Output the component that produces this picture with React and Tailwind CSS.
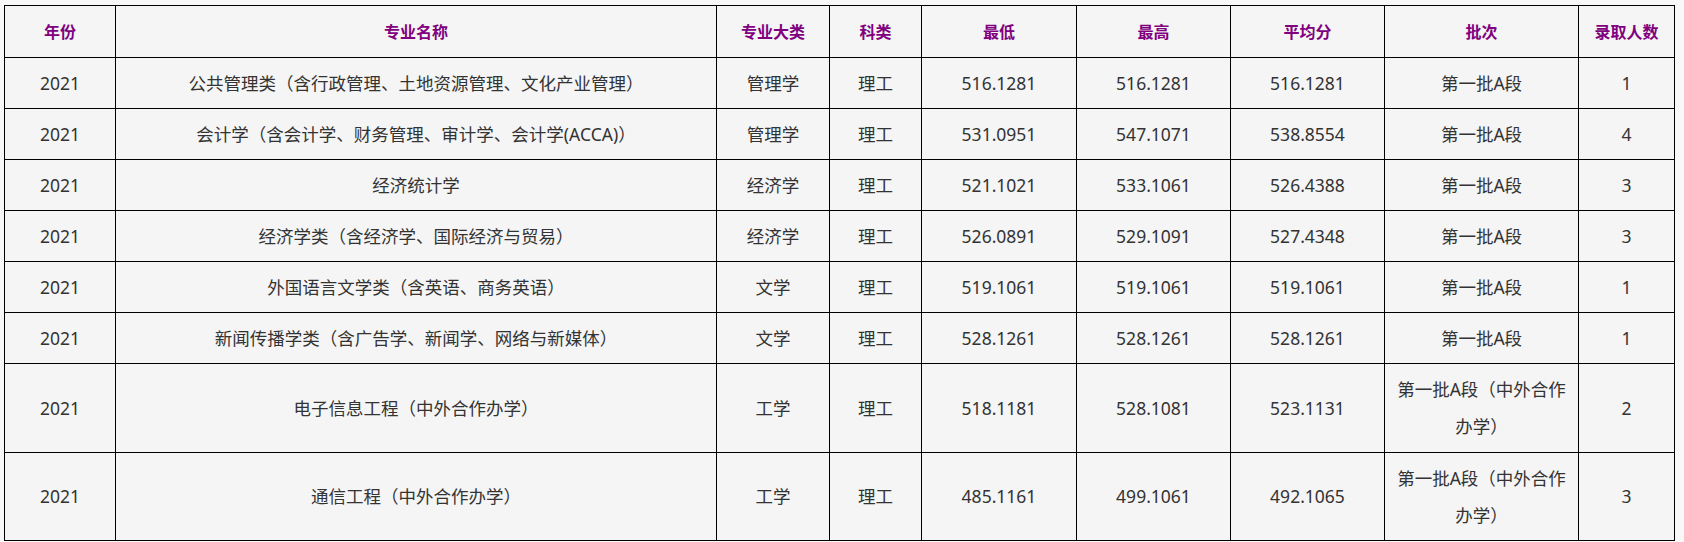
import React from 'react';

const headers = ['年份', '专业名称', '专业大类', '科类', '最低', '最高', '平均分', '批次', '录取人数'];
const widths = ['w-[111px]', 'w-[601px]', 'w-[113px]', 'w-[92px]', 'w-[155px]', 'w-[154px]', 'w-[154px]', 'w-[194px]', 'w-[96px]'];

const rows = [
  ['2021', '公共管理类（含行政管理、土地资源管理、文化产业管理）', '管理学', '理工', '516.1281', '516.1281', '516.1281', '第一批A段', '1'],
  ['2021', '会计学（含会计学、财务管理、审计学、会计学(ACCA)）', '管理学', '理工', '531.0951', '547.1071', '538.8554', '第一批A段', '4'],
  ['2021', '经济统计学', '经济学', '理工', '521.1021', '533.1061', '526.4388', '第一批A段', '3'],
  ['2021', '经济学类（含经济学、国际经济与贸易）', '经济学', '理工', '526.0891', '529.1091', '527.4348', '第一批A段', '3'],
  ['2021', '外国语言文学类（含英语、商务英语）', '文学', '理工', '519.1061', '519.1061', '519.1061', '第一批A段', '1'],
  ['2021', '新闻传播学类（含广告学、新闻学、网络与新媒体）', '文学', '理工', '528.1261', '528.1261', '528.1261', '第一批A段', '1'],
  ['2021', '电子信息工程（中外合作办学）', '工学', '理工', '518.1181', '528.1081', '523.1131', '第一批A段（中外合作办学）', '2'],
  ['2021', '通信工程（中外合作办学）', '工学', '理工', '485.1161', '499.1061', '492.1065', '第一批A段（中外合作办学）', '3'],
];

// row heights follow the screenshot: single-line rows 51px, wrapped rows 89/88px
const heights = ['h-[51px]', 'h-[51px]', 'h-[51px]', 'h-[51px]', 'h-[51px]', 'h-[51px]', 'h-[89px]', 'h-[88px]'];

const App = () => {
  return (
    <div
      className="min-h-screen bg-[#f8f8f8] pl-[4px] pt-[5px]"
      style={{ fontFamily: '"Noto Sans", "Noto Sans CJK SC", sans-serif' }}
    >
      <table className="w-[1671px] table-fixed border-collapse bg-[#f5f5f5] text-center">
        <colgroup>
          {widths.map((w, i) => (
            <col key={i} className={w} />
          ))}
        </colgroup>
        <thead>
          <tr className="h-[52px]">
            {headers.map((h) => (
              <th key={h} className="border border-black px-2 text-[16px] font-bold text-[#800080]">
                {h}
              </th>
            ))}
          </tr>
        </thead>
        <tbody>
          {rows.map((row, i) => (
            <tr key={i} className={heights[i]}>
              {row.map((cell, j) => (
                <td
                  key={j}
                  className="border border-black px-2 align-middle text-[17.5px] leading-[37px] text-[#333333]"
                >
                  {cell}
                </td>
              ))}
            </tr>
          ))}
        </tbody>
      </table>
    </div>
  );
};

export default App;
